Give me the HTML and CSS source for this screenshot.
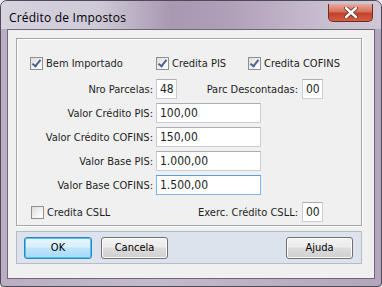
FILE: index.html
```html
<!DOCTYPE html>
<html lang="pt">

<head>
    <meta charset="UTF-8">
    <title>Crédito de Impostos</title>
    <link rel="stylesheet" href="styles.css">
</head>

<body>
    <div class="window">
        <div class="titlebar">
            <span class="title">Crédito de Impostos</span>
            <div class="close">
                <svg width="14" height="11" viewBox="0 0 14 11">
                    <path d="M2 1 L12 10 M12 1 L2 10" stroke="#5a2a20" stroke-width="4" stroke-linecap="round" />
                    <path d="M2 1 L12 10 M12 1 L2 10" stroke="#ffffff" stroke-width="2.4" stroke-linecap="round" />
                </svg>
            </div>
        </div>

        <div class="client">
            <div class="panel">
                <div class="row checks">
                    <label class="check w1"><span class="box on"></span>Bem Importado</label>
                    <label class="check w2"><span class="box on"></span>Credita PIS</label>
                    <label class="check"><span class="box on"></span>Credita COFINS</label>
                </div>

                <div class="row r2">
                    <span class="lbl">Nro Parcelas:</span>
                    <span class="field small">48</span>
                    <span class="lbl2">Parc Descontadas:</span>
                    <span class="field small">00</span>
                </div>

                <div class="row">
                    <span class="lbl">Valor Crédito PIS:</span>
                    <span class="field wide">100,00</span>
                </div>
                <div class="row">
                    <span class="lbl">Valor Crédito COFINS:</span>
                    <span class="field wide">150,00</span>
                </div>
                <div class="row">
                    <span class="lbl">Valor Base PIS:</span>
                    <span class="field wide">1.000,00</span>
                </div>
                <div class="row">
                    <span class="lbl">Valor Base COFINS:</span>
                    <span class="field wide focus">1.500,00</span>
                </div>

                <div class="row last">
                    <label class="check csll"><span class="box"></span>Credita CSLL</label>
                    <span class="lbl2">Exerc. Crédito CSLL:</span>
                    <span class="field small">00</span>
                </div>
            </div>

            <div class="buttons">
                <button class="btn default">OK</button>
                <button class="btn">Cancela</button>
                <button class="btn right">Ajuda</button>
            </div>
        </div>
    </div>
</body>

</html>
```

FILE: styles.css
```css
body {
    margin: 0;
    background: #e8e8ec;
    font-family: 'DejaVu Sans Condensed', 'DejaVu Sans', Tahoma, sans-serif;
    font-size: 11px;
    color: #1e1e1e;
}

.window {
    width: 382px;
    height: 287px;
    box-sizing: border-box;
    border: 1px solid #4e4a56;
    border-radius: 7px 7px 4px 4px;
    background: linear-gradient(to right, #b9aec3 0%, #c3bacb 40%, #b3a6bd 100%);
    padding: 0 6px 7px 6px;
    display: flex;
    flex-direction: column;
}

.titlebar {
    height: 28px;
    display: flex;
    justify-content: space-between;
    align-items: flex-start;
    background: linear-gradient(to right, #d6d2de 0%, #cfcad8 25%, #a898b1 45%, #b09fb8 60%, #c8bed0 85%, #cfc7d6 100%);
    margin: 0 -6px;
    padding: 0 8px 0 8px;
    border-radius: 6px 6px 0 0;
}

.title {
    font-family: 'Open Sans', 'Noto Sans', sans-serif;
    font-size: 12px;
    margin-top: 8px;
    color: #000000;
    letter-spacing: 0.2px;
}

.close {
    width: 45px;
    height: 18px;
    margin-top: 3px;
    box-sizing: border-box;
    border: 1px solid #6d2d24;
    border-top: none;
    border-radius: 0 0 5px 5px;
    background: linear-gradient(to bottom, #e9a99a 0%, #d8705c 45%, #c2412a 55%, #d25f45 100%);
    display: flex;
    align-items: center;
    justify-content: center;
}

.client {
    flex: 1;
    background: #f0f0f0;
    border: 1px solid #6c6874;
    padding: 8px 12px 0 8px;
}

.panel {
    height: 188px;
    box-sizing: border-box;
    border: 1px solid #a6a6a6;
    box-shadow: inset 1px 1px 0 #ffffff, 1px 1px 0 #ffffff;
    padding-top: 14px;
}

.row {
    display: flex;
    align-items: center;
    height: 20px;
    margin-top: 4px;
}

.row.checks {
    margin-top: 0;
    padding-left: 13px;
}

.row.r2 {
    margin-top: 6px;
}

.row.last {
    margin-top: 7px;
    padding-left: 14px;
}

.check {
    display: flex;
    align-items: center;
}

.check.w1 {
    width: 126px;
}

.check.w2 {
    width: 92px;
}

.box {
    width: 13px;
    height: 13px;
    box-sizing: border-box;
    border: 1px solid #8e8f8f;
    background: linear-gradient(135deg, #dcdcdc 0%, #f4f4f4 60%, #ffffff 100%);
    margin-right: 3px;
    position: relative;
}

.box.on::after {
    content: "";
    position: absolute;
    left: 3px;
    top: 0px;
    width: 3px;
    height: 7px;
    border: solid #4d6390;
    border-width: 0 2px 2px 0;
    transform: rotate(38deg);
}

.lbl {
    width: 136px;
    text-align: right;
    margin-right: 3px;
}

.lbl2 {
    margin-left: auto;
    margin-right: 4px;
}

.field {
    height: 20px;
    box-sizing: border-box;
    background: #ffffff;
    border: 1px solid #c9cdd3;
    border-top-color: #abadb3;
    padding-left: 3px;
    line-height: 19px;
    font-size: 12px;
}

.field.small {
    width: 21px;
}

.r2 .field.small:last-child,
.last .field.small {
    margin-right: 38px;
}

.field.wide {
    width: 105px;
}

.field.focus {
    border-color: #7eb4ea;
    border-top-color: #569de5;
}

.buttons {
    margin-top: 5px;
    height: 33px;
    box-sizing: border-box;
    border: 1px solid #b4bcc8;
    background: #dce3ed;
    display: flex;
    align-items: center;
    padding: 0 8px 0 7px;
    gap: 9px;
}

.btn {
    height: 22px;
    width: 67px;
    font-family: inherit;
    font-size: 11px;
    color: #000000;
    border: 1px solid #707070;
    border-radius: 3px;
    background: linear-gradient(to bottom, #f2f2f2 0%, #ebebeb 45%, #dddddd 50%, #cfcfcf 100%);
    box-shadow: inset 0 0 0 1px #fcfcfc;
}

.btn.default {
    width: 68px;
    border-color: #3c7fb1;
    background: linear-gradient(to bottom, #eaf6fd 0%, #d9f0fc 45%, #bee6fd 50%, #a7d9f5 100%);
    box-shadow: inset 0 0 0 1px #48c6f4;
}

.btn.right {
    margin-left: auto;
}
```
